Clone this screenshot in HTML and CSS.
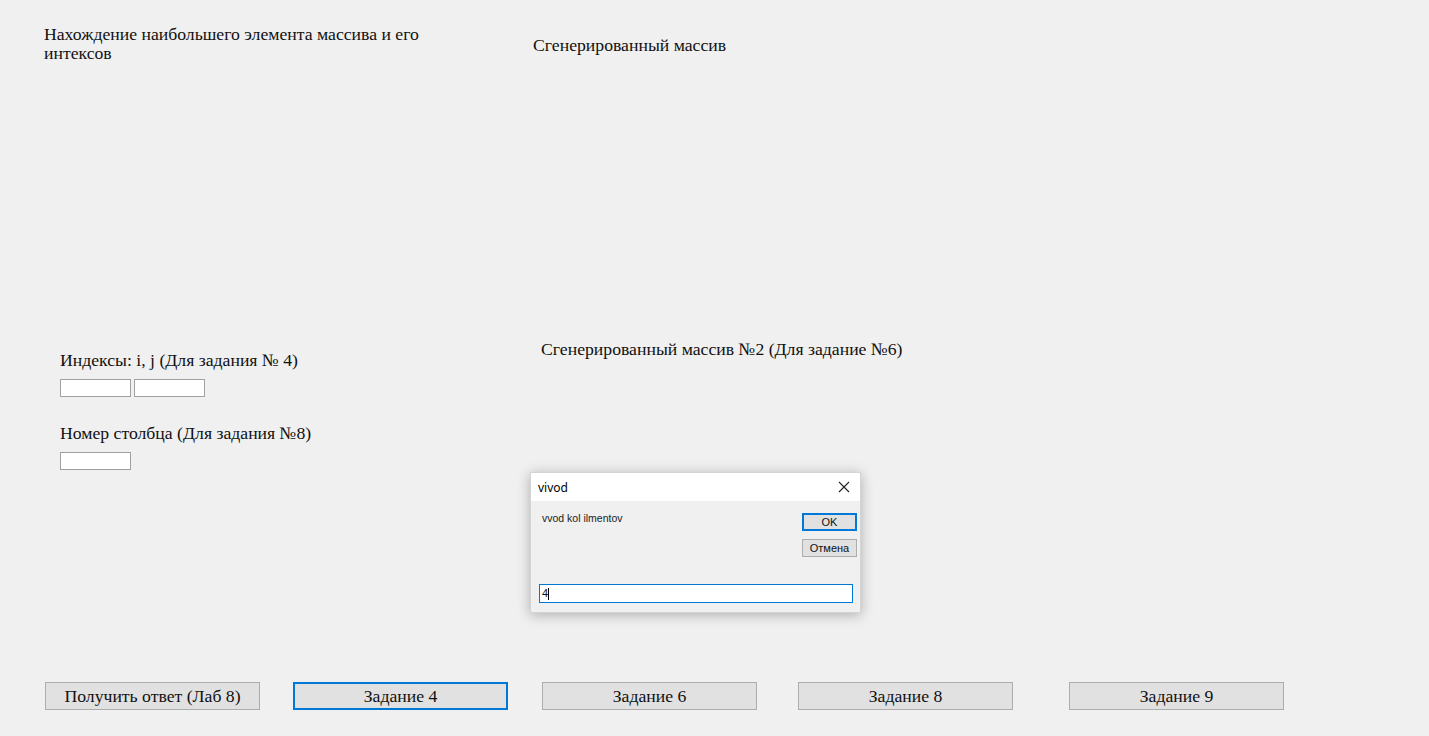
FILE: index.html
```html
<!DOCTYPE html>
<html>

<head>
    <meta charset="UTF-8">
    <title>Лаб 8</title>
    <link rel="stylesheet" href="styles.css">
</head>

<body>
    <main class="form">
        <section class="top">
            <h2 class="caption caption-left">Нахождение наибольшего элемента массива и его интексов</h2>
            <h2 class="caption">Сгенерированный массив</h2>
        </section>

        <section class="middle">
            <div class="inputs">
                <label class="caption">Индексы: i, j (Для задания № 4)</label>
                <div class="field-row">
                    <input class="field" type="text">
                    <input class="field" type="text">
                </div>
                <label class="caption caption-gap">Номер столбца (Для задания №8)</label>
                <div class="field-row">
                    <input class="field" type="text">
                </div>
            </div>
            <div class="second">
                <h2 class="caption">Сгенерированный массив №2 (Для задание №6)</h2>
            </div>
        </section>

        <nav class="buttons">
            <button class="knap">Получить ответ (Лаб 8)</button>
            <button class="knap knap-fokus gap-1">Задание 4</button>
            <button class="knap gap-2">Задание 6</button>
            <button class="knap gap-3">Задание 8</button>
            <button class="knap gap-4">Задание 9</button>
        </nav>
    </main>

    <section class="dialog">
        <div class="dialog-title">
            <span>vivod</span>
            <svg class="close" width="12" height="12" viewBox="0 0 12 12">
                <path d="M1 1 L11 11 M11 1 L1 11" stroke="#222" stroke-width="1.1" fill="none" />
            </svg>
        </div>
        <div class="dialog-body">
            <div class="dialog-top">
                <p class="dialog-text">vvod kol ilmentov</p>
                <div class="dialog-knapper">
                    <button class="dknap dknap-ok">OK</button>
                    <button class="dknap">Отмена</button>
                </div>
            </div>
            <div class="dialog-input">4<span class="caret"></span></div>
        </div>
    </section>
</body>

</html>
```

FILE: styles.css
```css
body {
    margin: 0;
    background-color: #f0f0f0;
    font-family: "Liberation Serif", "Times New Roman", serif;
    font-size: 17.7px;
    color: #111;
    overflow: hidden;
}

.form {
    height: 736px;
    display: flex;
    flex-direction: column;
    box-sizing: border-box;
    padding: 25px 0 26px 44px;
}

.caption {
    display: block;
    margin: 0;
    font-size: 17.7px;
    font-weight: normal;
    line-height: 19px;
}

.top {
    display: grid;
    grid-template-columns: 489px 1fr;
    height: 315px;
}

.top .caption:last-child {
    padding-top: 11px;
}

.caption-left {
    width: 385px;
}

.middle {
    display: grid;
    grid-template-columns: 497px 1fr;
}

.inputs {
    padding-left: 16px;
    padding-top: 11px;
}

.field-row {
    display: flex;
    gap: 3px;
    margin-top: 9px;
}

.field {
    width: 71px;
    height: 18px;
    box-sizing: border-box;
    border: 1px solid #a0a0a0;
    background: white;
    padding: 0;
    margin: 0;
}

.caption-gap {
    margin-top: 27px;
}

.buttons {
    margin-top: auto;
    display: flex;
    padding-left: 1px;
}

.knap {
    width: 215px;
    height: 28px;
    box-sizing: border-box;
    background-color: #e1e1e1;
    border: 1px solid #adadad;
    font-family: "Liberation Serif", "Times New Roman", serif;
    font-size: 17.7px;
    color: #111;
    padding: 0;
}

.knap-fokus {
    border: 2px solid #0078d7;
}

.gap-1 {
    margin-left: 33px;
}

.gap-2 {
    margin-left: 34px;
}

.gap-3 {
    margin-left: 41px;
}

.gap-4 {
    margin-left: 56px;
}

/* input dialog over the form */
.dialog {
    position: absolute;
    left: 530px;
    top: 472px;
    width: 331px;
    height: 141px;
    background-color: #f0f0f0;
    border: 1px solid #d4d4d4;
    box-sizing: border-box;
    box-shadow: 0 2px 12px rgba(0, 0, 0, 0.28);
    font-family: "Liberation Sans", Arial, sans-serif;
    display: flex;
    flex-direction: column;
}

.dialog-title {
    height: 28px;
    background: white;
    display: flex;
    align-items: center;
    justify-content: space-between;
    padding: 0 10px 0 7px;
    font-family: "Noto Sans", "Liberation Sans", sans-serif;
    font-size: 12px;
    color: #000;
}

.dialog-body {
    flex: 1;
    padding: 11px 3px 9px 8px;
    display: flex;
    flex-direction: column;
}

.dialog-top {
    display: flex;
    justify-content: space-between;
}

.dialog-text {
    margin: 0;
    padding-left: 3px;
    font-size: 10.5px;
    line-height: 12px;
    color: #222;
}

.dialog-knapper {
    display: flex;
    flex-direction: column;
    gap: 8px;
    padding-top: 1px;
}

.dknap {
    width: 55px;
    height: 18px;
    box-sizing: border-box;
    background: #e1e1e1;
    border: 1px solid #adadad;
    font-family: "Liberation Sans", Arial, sans-serif;
    font-size: 11px;
    padding: 0;
    color: #111;
}

.dknap-ok {
    border: 2px solid #0078d7;
}

.dialog-input {
    margin-top: auto;
    height: 19px;
    width: 314px;
    box-sizing: border-box;
    border: 1px solid #0078d7;
    background: white;
    font-size: 11px;
    line-height: 17px;
    padding-left: 2px;
    display: flex;
    align-items: center;
}

.caret {
    display: inline-block;
    width: 1px;
    height: 12px;
    background: #000;
}
```
